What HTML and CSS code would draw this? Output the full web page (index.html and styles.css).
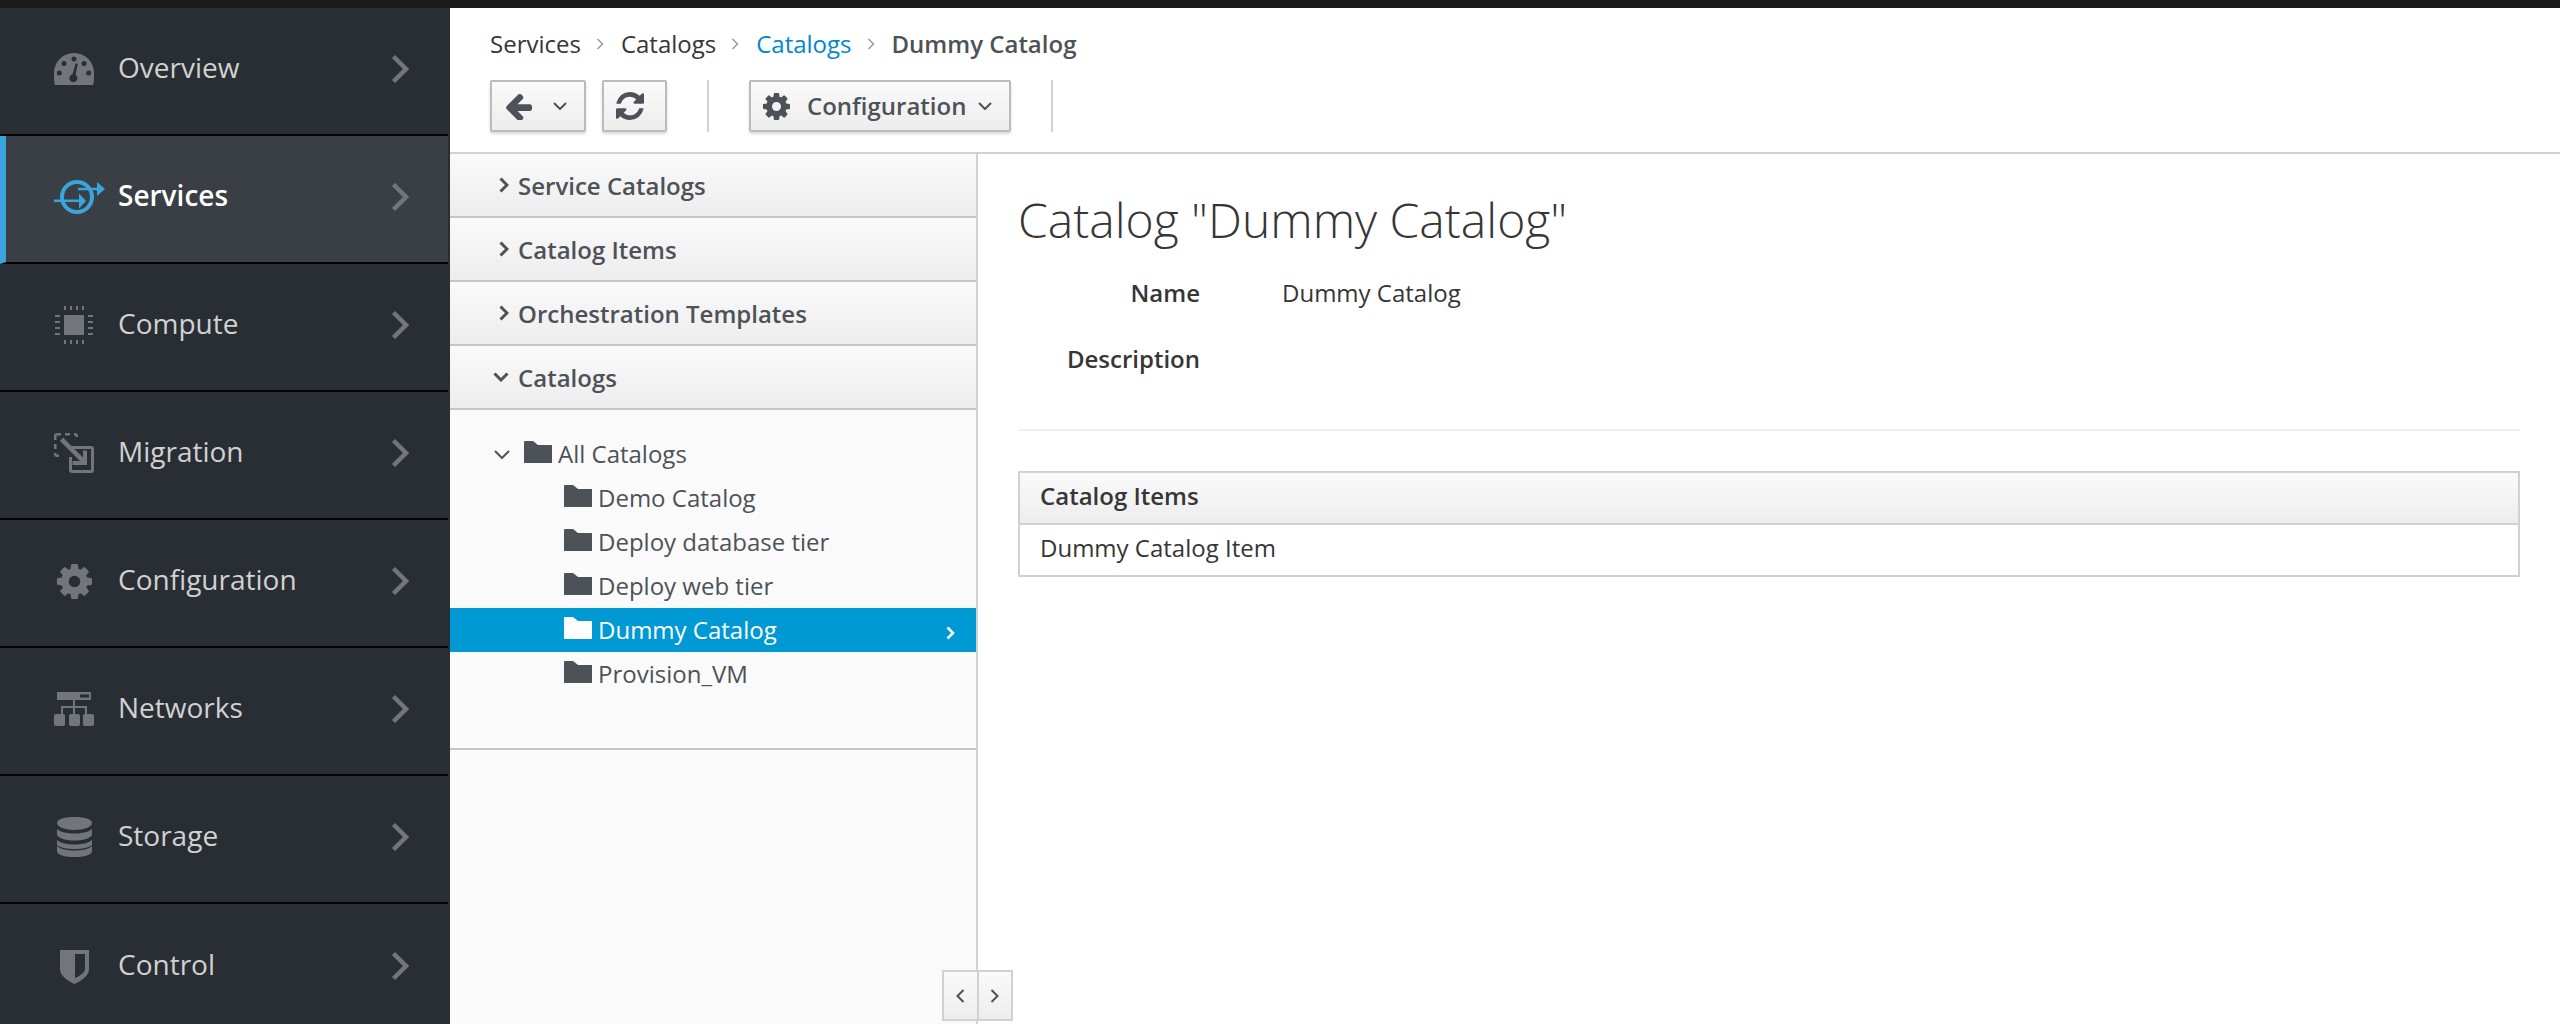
FILE: index.html
```html
<!DOCTYPE html>
<html lang="en">

<head>
  <meta charset="UTF-8" />
  <title>Catalogs</title>
  <link rel="stylesheet" href="styles.css">
</head>

<body>

  <div class="topbar"></div>

  <div class="layout">

    <!-- left navigation -->
    <nav class="sidebar">
      <a class="nav-item">
        <span class="nav-icon">
          <svg width="40" height="32" viewBox="0 0 40 32"><path fill-rule="evenodd" d="M1 32C.3 30 0 28 0 26v-6a20 20 0 0 1 40 0v6c0 2-.3 4-1 6zM20 3.500a2.500 2.500 0 1 0 0 5 2.500 2.500 0 0 0 0-5zM10 8a2.500 2.500 0 1 0 0 5 2.500 2.500 0 0 0 0-5zM30 8a2.500 2.500 0 1 0 0 5 2.500 2.500 0 0 0 0-5zM5.300 17.500a2.500 2.500 0 1 0 0 5 2.500 2.500 0 0 0 0-5zM34.700 17.500a2.500 2.500 0 1 0 0 5 2.500 2.500 0 0 0 0-5zM21.500 10.500l-3 10.800a4 4 0 1 0 3 .5l2.300-11z"/></svg>
        </span>
        <span class="nav-label">Overview</span>
        <svg class="nav-arrow" width="18" height="30" viewBox="0 0 18 30"><polyline points="2.500,2.500 15,15 2.500,27.500"/></svg>
      </a>
      <a class="nav-item active">
        <span class="nav-icon">
          <svg width="52" height="36" viewBox="0 0 52 36"><circle class="ring" cx="23" cy="18" r="15"/><path d="M0 20.500h25v-6l7 7.500-7 7.500v-6.500H0zM24 8.700h19V3l8 7-8 7v-5.700H24z"/></svg>
        </span>
        <span class="nav-label">Services</span>
        <svg class="nav-arrow" width="18" height="30" viewBox="0 0 18 30"><polyline points="2.500,2.500 15,15 2.500,27.500"/></svg>
      </a>
      <a class="nav-item">
        <span class="nav-icon icon-compute">
          <svg width="38" height="38" viewBox="0 0 38 38"><path d="M9 9h20v20H9zM9 0h2v4H9zM15 0h2v4h-2zM21 0h2v4h-2zM27 0h2v4h-2zM9 34h2v4H9zM15 34h2v4h-2zM21 34h2v4h-2zM27 34h2v4h-2zM0 9h5v2H0zM0 15h5v2H0zM0 21h5v2H0zM0 27h5v2H0zM33 9h5v2h-5zM33 15h5v2h-5zM33 21h5v2h-5zM33 27h5v2h-5z"/></svg>
        </span>
        <span class="nav-label">Compute</span>
        <svg class="nav-arrow" width="18" height="30" viewBox="0 0 18 30"><polyline points="2.500,2.500 15,15 2.500,27.500"/></svg>
      </a>
      <a class="nav-item">
        <span class="nav-icon">
          <svg width="40" height="40" viewBox="0 0 40 40"><path d="M0 3q0-3 3-3h4v2.500H3q-.5 0-.5.500v4H0zM11 0h5v2.500h-5zM20 0h1q3 0 3 3v1h-2.500V3q0-.5-.5-.5h-1zM0 11h2.500v5H0zM0 20h2.500v1q0 .5.500.5h2V24H3q-3 0-3-3zM15 13h22q3 0 3 3v21q0 3-3 3H18q-3 0-3-3V24h3v13h19V16H15z"/><path d="M9 4.500l20 20v-7h4V32H18.500v-4h7.500l-20-20z"/></svg>
        </span>
        <span class="nav-label">Migration</span>
        <svg class="nav-arrow" width="18" height="30" viewBox="0 0 18 30"><polyline points="2.500,2.500 15,15 2.500,27.500"/></svg>
      </a>
      <a class="nav-item">
        <span class="nav-icon icon-narrow">
          <svg width="35" height="35" viewBox="128 128 1536 1536"><path d="M1152 896q0-106-75-181t-181-75-181 75-75 181 75 181 181 75 181-75 75-181zm512-109v222q0 12-8 23t-20 13l-185 28q-19 54-39 91 35 50 107 138 10 12 10 25t-9 23q-27 37-99 108t-94 71q-12 0-26-9l-138-108q-44 23-91 38-16 136-29 186-7 28-36 28h-222q-14 0-24.500-8.500t-11.500-21.500l-28-184q-49-16-90-37l-141 107q-10 9-25 9-14 0-25-11-126-114-165-168-7-10-7-23 0-12 8-23 15-21 51-66.500t54-70.500q-27-50-41-99l-183-27q-13-2-21-12.500t-8-23.500v-222q0-12 8-23t19-13l186-28q14-46 39-92-40-57-107-138-10-12-10-24 0-10 9-23 26-36 98.500-107.500t94.500-71.500q13 0 26 10l138 107q44-23 91-38 16-136 29-186 7-28 36-28h222q14 0 24.500 8.500t11.500 21.500l28 184q49 16 90 37l142-107q9-9 24-9 13 0 25 10 129 119 165 170 7 8 7 22 0 12-8 23-15 21-51 66.500t-54 70.500q26 50 41 98l183 28q13 2 21 12.500t8 23.500z"/></svg>
        </span>
        <span class="nav-label">Configuration</span>
        <svg class="nav-arrow" width="18" height="30" viewBox="0 0 18 30"><polyline points="2.500,2.500 15,15 2.500,27.500"/></svg>
      </a>
      <a class="nav-item">
        <span class="nav-icon">
          <svg width="40" height="34" viewBox="0 0 40 34"><path fill-rule="evenodd" d="M3 0h34v8H3zM26 2.500v3h9v-3z"/><path d="M19 8h2v6h12v8h-2v-6H21v6h-2v-6H9v6H7v-8h12z"/><rect x="0" y="22" width="11" height="12" rx="2"/><rect x="15" y="22" width="11" height="12" rx="2"/><rect x="29" y="22" width="11" height="12" rx="2"/></svg>
        </span>
        <span class="nav-label">Networks</span>
        <svg class="nav-arrow" width="18" height="30" viewBox="0 0 18 30"><polyline points="2.500,2.500 15,15 2.500,27.500"/></svg>
      </a>
      <a class="nav-item">
        <span class="nav-icon icon-narrow">
          <svg width="35" height="40" viewBox="0 0 35 40"><path d="M0 6C0 2 8 0 17.500 0S35 2 35 6s-8 7-17.500 7S0 10 0 6zM0 12c3 3 10 4.500 17.500 4.500S32 15 35 12v5c0 4-8 6.500-17.500 6.500S0 21 0 17zM0 23c3 3 10 4.500 17.500 4.500S32 26 35 23v11c0 4-8 6-17.500 6S0 38 0 34zM0 28v1c3 3 10 4.500 17.500 4.500S32 32 35 29v-1c-3 2.800-10 4-17.500 4S3 30.800 0 28z"/></svg>
        </span>
        <span class="nav-label">Storage</span>
        <svg class="nav-arrow" width="18" height="30" viewBox="0 0 18 30"><polyline points="2.500,2.500 15,15 2.500,27.500"/></svg>
      </a>
      <a class="nav-item last">
        <span class="nav-icon icon-shield">
          <svg width="29" height="35" viewBox="0 0 29 35"><path fill-rule="evenodd" d="M0 1h29v19c0 7-8 12-14.500 15C8 32 0 27 0 20zM15 5v24c5-2 10-6 10-9V5z"/></svg>
        </span>
        <span class="nav-label">Control</span>
        <svg class="nav-arrow" width="18" height="30" viewBox="0 0 18 30"><polyline points="2.500,2.500 15,15 2.500,27.500"/></svg>
      </a>
    </nav>

    <main class="main">

      <header class="page-header">
        <ol class="breadcrumb">
          <li>Services</li>
          <li class="crumb-sep"><svg width="8" height="12" viewBox="0 0 8 12"><polyline points="1.500,1 6.500,6 1.500,11"/></svg></li>
          <li>Catalogs</li>
          <li class="crumb-sep"><svg width="8" height="12" viewBox="0 0 8 12"><polyline points="1.500,1 6.500,6 1.500,11"/></svg></li>
          <li class="crumb-link">Catalogs</li>
          <li class="crumb-sep"><svg width="8" height="12" viewBox="0 0 8 12"><polyline points="1.500,1 6.500,6 1.500,11"/></svg></li>
          <li class="crumb-current">Dummy Catalog</li>
        </ol>

        <div class="toolbar">
          <button class="btn btn-back">
            <svg class="btn-icon" width="27" height="27" viewBox="128 128 1536 1536"><path d="M1664 896v128q0 53-32.500 90.500t-84.500 37.500h-704l293 294q38 36 38 90t-38 90l-75 76q-37 37-90 37-52 0-91-37l-651-652q-37-37-37-90 0-52 37-91l651-650q38-38 91-38 52 0 90 38l75 74q38 38 38 91t-38 91l-293 293h704q52 0 84.500 37.500t32.500 90.500z"/></svg>
            <svg class="caret" width="14" height="8" viewBox="0 0 14 8"><polyline points="1,1 7,7 13,1"/></svg>
          </button>
          <button class="btn btn-refresh">
            <svg class="btn-icon" width="28" height="28" viewBox="128 128 1536 1536"><path d="M1639 1056q0 5-1 7-64 268-268 434.500t-478 166.500q-146 0-282.500-55t-243.500-157l-129 129q-19 19-45 19t-45-19-19-45v-448q0-26 19-45t45-19h448q26 0 45 19t19 45-19 45l-137 137q71 66 161 102t187 36q134 0 250-65t186-179q11-17 53-117 8-23 30-23h192q13 0 22.500 9.500t9.500 22.500zm25-800v448q0 26-19 45t-45 19h-448q-26 0-45-19t-19-45 19-45l138-138q-148-137-349-137-134 0-250 65t-186 179q-11 17-53 117-8 23-30 23h-199q-13 0-22.500-9.500t-9.500-22.500v-7q65-268 270-434.500t480-166.500q146 0 284 55.500t245 156.500l130-129q19-19 45-19t45 19 19 45z"/></svg>
          </button>
          <span class="toolbar-sep"></span>
          <button class="btn btn-config">
            <svg class="btn-icon" width="27" height="27" viewBox="128 128 1536 1536"><path d="M1152 896q0-106-75-181t-181-75-181 75-75 181 75 181 181 75 181-75 75-181zm512-109v222q0 12-8 23t-20 13l-185 28q-19 54-39 91 35 50 107 138 10 12 10 25t-9 23q-27 37-99 108t-94 71q-12 0-26-9l-138-108q-44 23-91 38-16 136-29 186-7 28-36 28h-222q-14 0-24.500-8.500t-11.500-21.500l-28-184q-49-16-90-37l-141 107q-10 9-25 9-14 0-25-11-126-114-165-168-7-10-7-23 0-12 8-23 15-21 51-66.500t54-70.500q-27-50-41-99l-183-27q-13-2-21-12.500t-8-23.500v-222q0-12 8-23t19-13l186-28q14-46 39-92-40-57-107-138-10-12-10-24 0-10 9-23 26-36 98.500-107.500t94.500-71.500q13 0 26 10l138 107q44-23 91-38 16-136 29-186 7-28 36-28h222q14 0 24.500 8.500t11.500 21.500l28 184q49 16 90 37l142-107q9-9 24-9 13 0 25 10 129 119 165 170 7 8 7 22 0 12-8 23-15 21-51 66.500t-54 70.500q26 50 41 98l183 28q13 2 21 12.500t8 23.500z"/></svg>
            <span class="btn-text">Configuration</span>
            <svg class="caret" width="14" height="8" viewBox="0 0 14 8"><polyline points="1,1 7,7 13,1"/></svg>
          </button>
          <span class="toolbar-sep"></span>
        </div>
      </header>

      <div class="content">

        <aside class="left-pane">
          <div class="acc-head">
            <svg class="acc-arrow" width="10" height="16" viewBox="0 0 10 16"><polyline points="1.500,1.500 8,8 1.500,14.500"/></svg>
            <span>Service Catalogs</span>
          </div>
          <div class="acc-head">
            <svg class="acc-arrow" width="10" height="16" viewBox="0 0 10 16"><polyline points="1.500,1.500 8,8 1.500,14.500"/></svg>
            <span>Catalog Items</span>
          </div>
          <div class="acc-head">
            <svg class="acc-arrow" width="10" height="16" viewBox="0 0 10 16"><polyline points="1.500,1.500 8,8 1.500,14.500"/></svg>
            <span>Orchestration Templates</span>
          </div>
          <div class="acc-head acc-open">
            <svg class="acc-arrow" width="16" height="10" viewBox="0 0 16 10"><polyline points="1.500,1.500 8,8 14.500,1.500"/></svg>
            <span>Catalogs</span>
          </div>

          <ul class="tree">
            <li class="tree-row tree-root">
              <svg class="tree-toggle" width="16" height="9" viewBox="0 0 16 9"><polyline points="1,1 8,8 15,1"/></svg>
              <svg class="folder" width="28" height="22" viewBox="0 0 28 22"><path d="M0 22V1q0-1 1-1h8l5 4h14v18z"/></svg>
              <span>All Catalogs</span>
            </li>
            <li class="tree-row">
              <svg class="folder" width="28" height="22" viewBox="0 0 28 22"><path d="M0 22V1q0-1 1-1h8l5 4h14v18z"/></svg>
              <span>Demo Catalog</span>
            </li>
            <li class="tree-row">
              <svg class="folder" width="28" height="22" viewBox="0 0 28 22"><path d="M0 22V1q0-1 1-1h8l5 4h14v18z"/></svg>
              <span>Deploy database tier</span>
            </li>
            <li class="tree-row">
              <svg class="folder" width="28" height="22" viewBox="0 0 28 22"><path d="M0 22V1q0-1 1-1h8l5 4h14v18z"/></svg>
              <span>Deploy web tier</span>
            </li>
            <li class="tree-row selected">
              <svg class="folder" width="28" height="22" viewBox="0 0 28 22"><path d="M0 22V1q0-1 1-1h8l5 4h14v18z"/></svg>
              <span>Dummy Catalog</span>
              <svg class="tree-arrow" width="9" height="14" viewBox="0 0 9 14"><polyline points="1.500,1.500 7,7 1.500,12.500"/></svg>
            </li>
            <li class="tree-row">
              <svg class="folder" width="28" height="22" viewBox="0 0 28 22"><path d="M0 22V1q0-1 1-1h8l5 4h14v18z"/></svg>
              <span>Provision_VM</span>
            </li>
          </ul>
        </aside>

        <section class="detail">
          <h1>Catalog "Dummy Catalog"</h1>

          <dl class="props">
            <dt>Name</dt>
            <dd>Dummy Catalog</dd>
            <dt>Description</dt>
            <dd></dd>
          </dl>

          <hr class="rule">

          <table class="items">
            <thead>
              <tr><th>Catalog Items</th></tr>
            </thead>
            <tbody>
              <tr><td>Dummy Catalog Item</td></tr>
            </tbody>
          </table>
        </section>

        <!-- collapse handle sits over the pane divider -->
        <div class="pane-toggle">
          <span class="pane-btn"><svg width="9" height="14" viewBox="0 0 9 14"><polyline points="7.500,1 1.500,7 7.500,13"/></svg></span>
          <span class="pane-btn"><svg width="9" height="14" viewBox="0 0 9 14"><polyline points="1.500,1 7.500,7 1.500,13"/></svg></span>
        </div>
      </div>
    </main>
  </div>

</body>

</html>
```

FILE: styles.css
```css
* {
  box-sizing: border-box;
}

html,
body {
  height: 100%;
}

body {
  margin: 0;
  font-family: 'Open Sans', sans-serif;
  font-size: 24px;
  color: #363636;
  background: #fff;
  overflow: hidden;
}

svg {
  display: block;
  flex: none;
}

.topbar {
  height: 8px;
  background: #1a1a1a;
}

.layout {
  display: flex;
  height: 1016px;
}

/* left navigation */
.sidebar {
  width: 450px;
  flex: none;
  background: #292e34;
  padding-right: 2px;
}

.nav-item {
  display: flex;
  align-items: center;
  height: 128px;
  padding-left: 54px;
  padding-bottom: 4px;
  color: #d1d1d1;
  font-size: 28px;
  border-bottom: 2px solid #030303;
}

.nav-item.last {
  border-bottom: none;
}

.nav-icon {
  width: 64px;
  flex: none;
  fill: #72767b;
}

.icon-compute {
  padding-left: 1px;
}

.icon-narrow {
  padding-left: 3px;
}

.icon-shield {
  padding-left: 6px;
}

.nav-label {
  flex: 1;
  margin-top: -4px;
}

.nav-arrow {
  margin-right: 39px;
  fill: none;
  stroke: #72767b;
  stroke-width: 4.500;
}

.nav-item.active {
  background: #393f44;
  color: #fff;
  font-weight: 600;
  padding-left: 48px;
  border-left: 6px solid #39a5dc;
}

.nav-item.active .nav-icon {
  fill: #39a5dc;
}

.ring {
  fill: none;
  stroke: #39a5dc;
  stroke-width: 4;
}

/* header with breadcrumb and toolbar */
.main {
  flex: 1;
  display: flex;
  flex-direction: column;
  min-width: 0;
}

.page-header {
  height: 146px;
  flex: none;
  padding: 12px 40px 0;
  border-bottom: 2px solid #d1d1d1;
}

.breadcrumb {
  display: flex;
  align-items: center;
  height: 48px;
  margin: 0;
  padding: 0 0 2px;
  list-style: none;
  color: #363636;
}

.crumb-sep {
  margin: 2px 17px 0 15px;
  fill: none;
  stroke: #9c9c9c;
  stroke-width: 1.500;
}

.crumb-link {
  color: #0088ce;
}

.crumb-current {
  color: #4d5258;
  font-weight: 600;
}

.toolbar {
  display: flex;
  align-items: center;
  margin-top: 12px;
}

.btn {
  display: flex;
  align-items: center;
  height: 52px;
  padding: 0;
  border: 2px solid #bbb;
  border-radius: 2px;
  background: linear-gradient(to bottom, #fafafa, #ededed);
  box-shadow: 0 2px 3px rgba(0, 0, 0, 0.15);
  font: 600 24px 'Open Sans', sans-serif;
  color: #4d5258;
}

.btn-icon {
  fill: #4d5258;
}

.caret {
  fill: none;
  stroke: #4d5258;
  stroke-width: 2;
}

.btn-back {
  width: 96px;
  padding-left: 13px;
  gap: 21px;
}

.btn-refresh {
  width: 65px;
  margin-left: 16px;
  padding-left: 12px;
}

.btn-config {
  width: 262px;
  padding-left: 12px;
}

.btn-text {
  margin: -2px 12px 0 17px;
}

.toolbar-sep {
  width: 2px;
  height: 52px;
  margin: 0 40px;
  background: #d1d1d1;
}

/* accordion and tree */
.content {
  flex: 1;
  display: flex;
  min-height: 0;
  position: relative;
}

.left-pane {
  width: 528px;
  flex: none;
  background: #fafafa;
  border-right: 2px solid #d1d1d1;
}

.acc-head {
  display: flex;
  align-items: center;
  height: 64px;
  padding: 0 0 0 49px;
  border-bottom: 2px solid #c6c6c6;
  background: linear-gradient(to bottom, #fafafa, #ededed);
  color: #4d5258;
  font-weight: 600;
}

.acc-head span {
  margin-left: 9px;
}

.acc-arrow {
  fill: none;
  stroke: #4d5258;
  stroke-width: 3;
}

.acc-open {
  padding-left: 43px;
}

.acc-open span {
  margin-left: 9px;
}

.tree {
  height: 340px;
  margin: 0;
  padding: 22px 0 0;
  list-style: none;
  border-bottom: 2px solid #c6c6c6;
  color: #4d5258;
}

.tree-row {
  display: flex;
  align-items: center;
  height: 44px;
  padding-left: 114px;
}

.tree-row span {
  margin-top: -1px;
}

.tree-row .folder {
  fill: #4d5258;
  margin: -5px 6px 0 0;
}

.tree-root {
  padding-left: 44px;
}

.tree-toggle {
  fill: none;
  stroke: #4d5258;
  stroke-width: 2;
  margin-right: 14px;
}

.tree-row.selected {
  background: #0099d3;
  color: #fff;
}

.tree-row.selected .folder {
  fill: #fff;
}

.tree-arrow {
  margin: 6px 21px 0 auto;
  fill: none;
  stroke: #fff;
  stroke-width: 2.500;
}

/* right side details */
.detail {
  flex: 1;
  min-width: 0;
  padding: 0 40px;
}

h1 {
  margin: 38px 0 0;
  font-size: 48px;
  font-weight: 300;
  line-height: 56px;
  color: #363636;
}

.props {
  display: grid;
  grid-template-columns: 182px 1fr;
  column-gap: 82px;
  row-gap: 26px;
  margin: 25px 0 0;
  line-height: 40px;
}

.props dt {
  font-weight: 600;
  text-align: right;
}

.props dd {
  margin: 0;
}

.rule {
  height: 2px;
  margin: 50px 0 0;
  border: none;
  background: #f1f1f1;
}

.items {
  width: 100%;
  margin-top: 40px;
  border-collapse: collapse;
  border: 2px solid #d1d1d1;
}

.items th {
  height: 52px;
  padding: 0 20px 5px;
  text-align: left;
  font-weight: 600;
  border-bottom: 2px solid #d1d1d1;
  background: linear-gradient(to bottom, #fafafa, #ededed);
}

.items td {
  height: 52px;
  padding: 0 20px 5px;
}

.pane-toggle {
  position: absolute;
  left: 492px;
  bottom: 3px;
  display: flex;
  width: 71px;
  height: 51px;
  border: 2px solid #d1d1d1;
  background: linear-gradient(to bottom, #fafafa, #ededed);
}

.pane-btn {
  flex: 1;
  display: flex;
  align-items: center;
  justify-content: center;
  fill: none;
  stroke: #4d5258;
  stroke-width: 2;
}

.pane-btn + .pane-btn {
  border-left: 2px solid #d1d1d1;
}
```
